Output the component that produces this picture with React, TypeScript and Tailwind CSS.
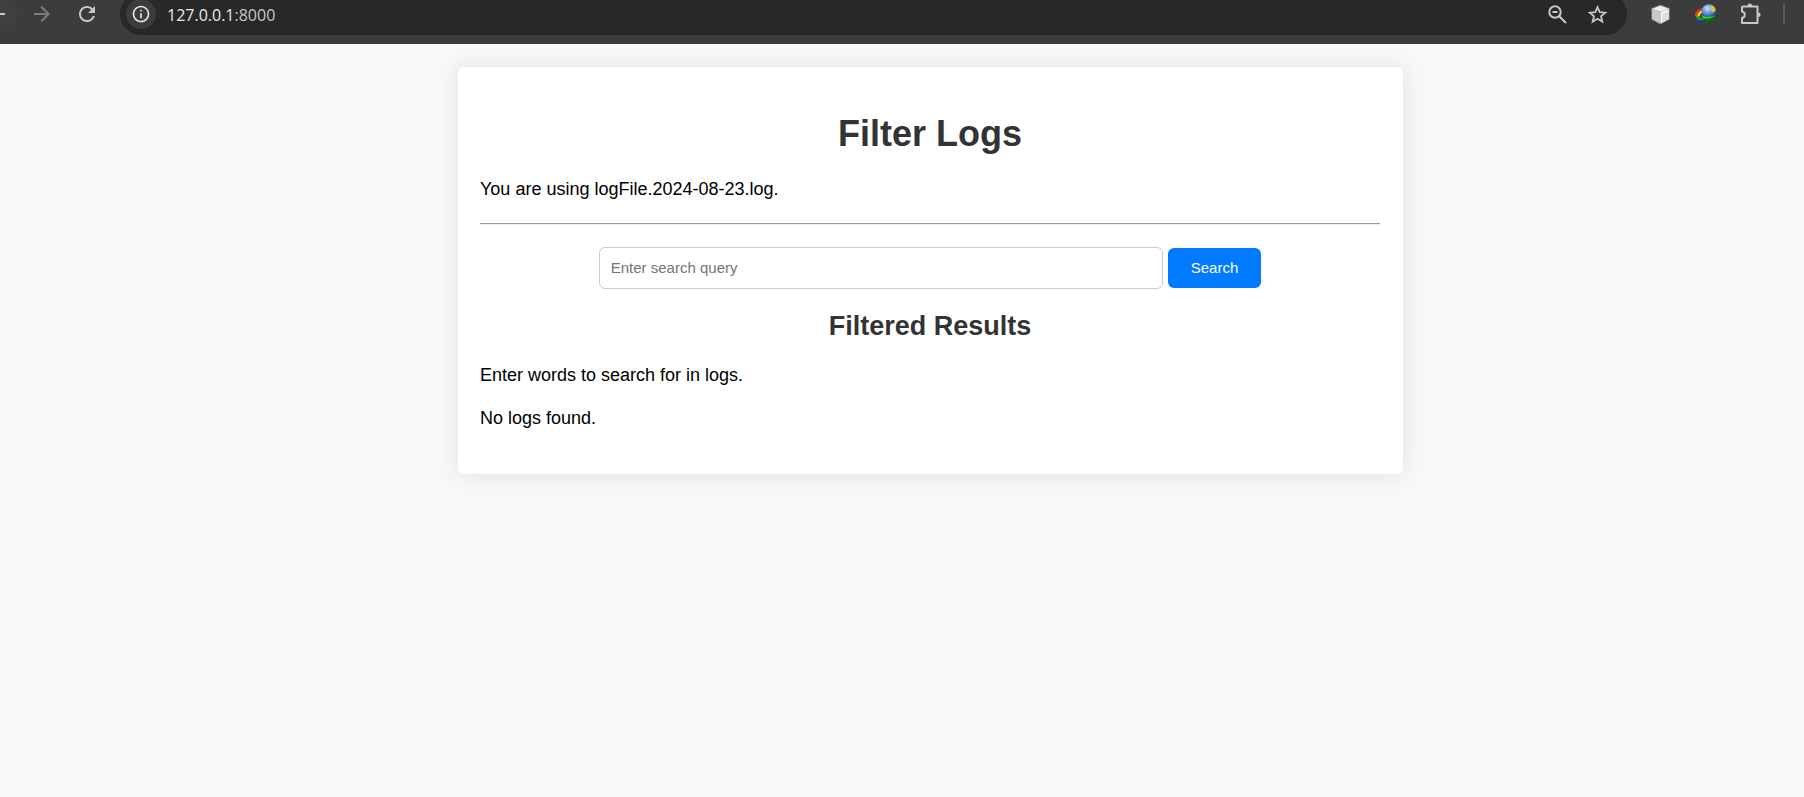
import { MdArrowForward, MdOutlineInfo, MdRefresh } from "react-icons/md";

function ZoomOutIcon() {
  return (
    <svg width="24" height="24" viewBox="0 0 24 24" fill="none" stroke="currentColor" strokeWidth="2" aria-hidden="true">
      <circle cx="10" cy="10" r="5.7" />
      <path d="M14.200 14.200 21 21M7.500 10h5" />
    </svg>
  );
}

function StarIcon() {
  return (
    <svg width="24" height="24" viewBox="0 0 24 24" fill="none" stroke="currentColor" strokeWidth="1.800" aria-hidden="true">
      <path d="M12.500 5.200 14.700 10.200 20.200 10.700 16 14.300 17.300 19.700 12.500 16.800 7.700 19.700 9 14.300 4.800 10.700 10.300 10.200z" />
    </svg>
  );
}

function CubeIcon() {
  return (
    <svg width="24" height="24" viewBox="0 0 24 24" aria-hidden="true">
      <path d="M12.500 2.500 22 6v11.500l-9.500 5-9.500-5V6z" fill="#8a8a8a" opacity=".6" />
      <path d="M12.500 3.500 21 6.700 12.500 10 4 6.700z" fill="#ededed" />
      <path d="M4 6.700 12.500 10v11.700L4 17.300z" fill="#c9c9c9" />
      <path d="M21 6.700 12.500 10v11.700l8.500-4.400z" fill="#dcdcdc" />
      <path d="M13.500 11v9.500M13.500 11 20 8.500" stroke="#f8f8f8" strokeWidth="1.400" fill="none" />
    </svg>
  );
}

function GlobeIcon() {
  return (
    <svg width="24" height="24" viewBox="0 0 24 24" aria-hidden="true">
      <defs>
        <radialGradient id="globe" cx=".4" cy=".3" r=".75">
          <stop offset="0" stopColor="#cfe6ff" />
          <stop offset=".45" stopColor="#5c97dc" />
          <stop offset="1" stopColor="#173a8c" />
        </radialGradient>
      </defs>
      <path d="M9.500 7.500C4.500 9 2.500 13 3.500 16c1.500 3.500 6 3.500 10 1.500" fill="none" stroke="#1c2fc0" strokeWidth="3" />
      <path d="M9.500 8C5 9.500 3 12.500 3.800 15c1.500 2.500 5 2.500 9 1" fill="none" stroke="#1fa61c" strokeWidth="2.400" />
      <path d="M10.500 7.200C6 8 3.200 10.500 3 13.800" fill="none" stroke="#ec3a1e" strokeWidth="2.600" />
      <path d="M10.500 9C7.500 10 5.500 12 5.600 14.500" fill="none" stroke="#f4dc3c" strokeWidth="2" />
      <circle cx="15.800" cy="9.300" r="7" fill="url(#globe)" />
      <path d="M18 3c2.500.7 4.500 2.800 4.800 5.500l-2.800 2-3-2.500z" fill="#cfc548" />
      <path d="M7.500 12c3.500 3.500 9.500 3.500 15 1.500-1 3-3.500 5-6 6L12.500 23l.3-4.500C10.500 17.500 8 15 7.500 12z" fill="#0d6a12" />
      <path d="M7.500 12c3.500 3.500 9.500 3.500 15 1.500-3.500 2.700-8 3.800-12.300 2.700z" fill="#3bd02c" />
    </svg>
  );
}

function PuzzleIcon() {
  return (
    <svg width="24" height="24" viewBox="0 0 24 24" fill="none" aria-hidden="true">
      <path
        d="M5 4.500h14.500V21H4v-5c1.800-.5 2.800-1.700 2.800-3.300S5.800 10 4 9.500v-4a1 1 0 0 1 1-1z"
        stroke="#c7c7c7"
        strokeWidth="2"
        strokeLinejoin="round"
      />
      <path d="M9.500 4.500V3.700a2.300 2.300 0 0 1 4.600 0v.8zM19.500 10.500h.8a2.300 2.300 0 0 1 0 4.600h-.8z" fill="#c7c7c7" />
    </svg>
  );
}

function BrowserBar() {
  return (
    <header className="flex h-11 items-center overflow-hidden bg-[#3c3c3c] pr-[19px] pb-4 text-[#c7c7c7]">
      <button type="button" aria-label="Back" className="flex h-9 w-[18px] shrink-0 items-center rounded-r-full bg-[#3f3f3f]">
        <span className="h-0.5 w-[5px] bg-[#c7c7c7]" />
      </button>
      <button type="button" aria-label="Forward" className="ml-3 shrink-0 text-[#7d7d7d]">
        <MdArrowForward size={24} />
      </button>
      <button type="button" aria-label="Reload" className="ml-[21px] shrink-0">
        <MdRefresh size={24} />
      </button>
      <div className="ml-[21px] flex h-[42px] min-w-0 flex-1 items-center rounded-full bg-[#282828] pr-[18px] pl-1.5">
        <button type="button" aria-label="View site information" className="flex size-[30px] shrink-0 items-center justify-center rounded-full bg-[#3c3c3c] text-[#e3e3e3]">
          <MdOutlineInfo size={20} />
        </button>
        <a href="#" className="ml-[11px] flex-1 pt-0.5 font-['Open_Sans',sans-serif] text-[16px] leading-6 text-[#c7c7c7]">
          <span className="text-[#e8e8e8]">127.0.0.1</span>:8000
        </a>
        <button type="button" aria-label="Zoom" className="shrink-0">
          <ZoomOutIcon />
        </button>
        <button type="button" aria-label="Bookmark this page" className="ml-4 shrink-0">
          <StarIcon />
        </button>
      </div>
      <div className="ml-[21px] flex shrink-0 items-center gap-[21px]">
        <button type="button" aria-label="Cube extension"><CubeIcon /></button>
        <button type="button" aria-label="Download manager"><GlobeIcon /></button>
        <button type="button" aria-label="Extensions"><PuzzleIcon /></button>
        <div className="h-5 w-0.5 bg-[#5c5c5c]" />
      </div>
    </header>
  );
}

export default function App() {
  return (
    <div className="min-h-screen bg-[#f8f8f8] font-['Liberation_Sans',Arial,sans-serif] text-[18px] leading-[23px] text-black">
      <BrowserBar />
      <main className="pt-[23px] pl-[57px]">
        <section className="mx-auto max-w-[945px] rounded-md bg-white pt-[46px] pr-[23px] pb-[44px] pl-[22px] shadow-[0_0_22px_rgba(0,0,0,0.1)]">
          <h1 className="text-center text-[36px] leading-[41px] font-bold text-[#333]">Filter Logs</h1>
          <p className="mt-6">You are using logFile.2024-08-23.log.</p>
          <hr className="mt-[22px] border-t border-b border-t-[#9a9a9a] border-b-[#eee]" />
          <form className="mt-[22px] flex items-center justify-center gap-[5px]" onSubmit={(e) => e.preventDefault()}>
            <input
              type="text"
              aria-label="Search query"
              placeholder="Enter search query"
              className="h-[42px] w-[564px] min-w-0 rounded-md border border-[#ccc] px-[11px] pb-0.5 text-[15px] leading-[18px] placeholder:text-[#757575]"
            />
            <button type="submit" className="h-10 rounded-md bg-[#007bff] px-[23px] text-[15px] leading-[18px] text-white">
              Search
            </button>
          </form>
          <h2 className="mt-[22px] text-center text-[27px] leading-[31px] font-bold text-[#333]">Filtered Results</h2>
          <p className="mt-[22px]">Enter words to search for in logs.</p>
          <p className="mt-5">No logs found.</p>
        </section>
      </main>
    </div>
  );
}
